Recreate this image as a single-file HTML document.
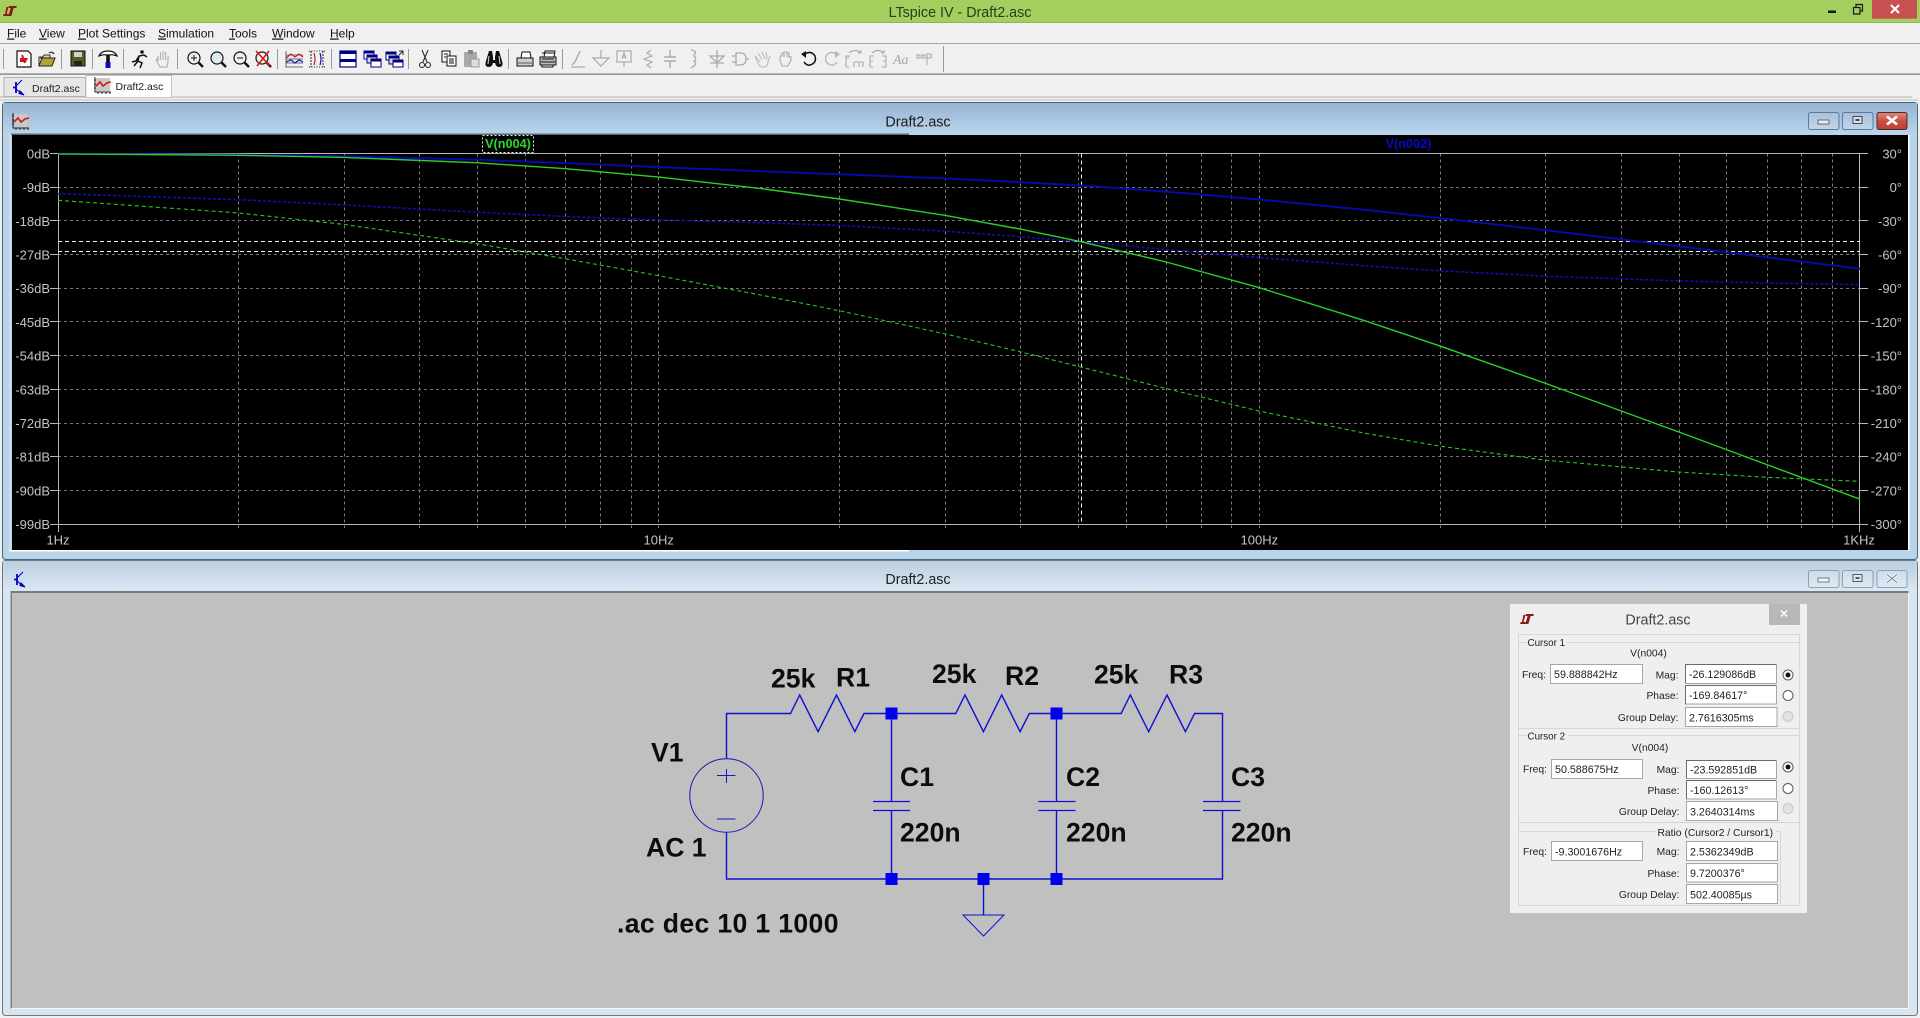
<!DOCTYPE html>
<html><head><meta charset="utf-8"><title>LTspice IV - Draft2.asc</title>
<style>
html,body{margin:0;padding:0;background:#f0f0f0;overflow:hidden;width:1920px;height:1018px}
svg{display:block;position:absolute;left:0;top:0}
text{font-family:"Liberation Sans",Arial,sans-serif}
.m{font-size:12px;fill:#111}
.t{font-size:14.3px;fill:#222}
.tb{font-size:10.5px;fill:#222}
.ax{font-size:13px;fill:#c4c4c4}
.ar{text-anchor:end}
.mid{text-anchor:middle}
.c{font-weight:bold;font-size:26.6px;fill:#0c0c0c}
.d{font-size:10.7px;fill:#222}
.l{font-size:10.3px;fill:#222}
.fl{fill:#fff;stroke:#a6a6a6;stroke-width:1}
.fd{fill:#fff;stroke:#a6a6a6;stroke-width:1}
.fde{fill:none;stroke:#6a6a6a;stroke-width:1}
.gl{fill:none;stroke:#d6d6d6;stroke-width:1}
.s{fill:none;stroke-linecap:butt}
.dg{fill:none;stroke:#a8a8a8;stroke-width:1.2}
</style></head><body>
<svg width="1920" height="1018" viewBox="0 0 1920 1018" xmlns="http://www.w3.org/2000/svg">
<defs>
<linearGradient id="g1" x1="0" y1="0" x2="0" y2="1"><stop offset="0" stop-color="#98b4d3"/><stop offset="1" stop-color="#bad4eb"/></linearGradient>
<linearGradient id="g2" x1="0" y1="0" x2="0" y2="1"><stop offset="0" stop-color="#bccedf"/><stop offset="1" stop-color="#dae8f3"/></linearGradient>
<linearGradient id="bb" x1="0" y1="0" x2="0" y2="1"><stop offset="0" stop-color="#a9c0da"/><stop offset="1" stop-color="#c2d6ea"/></linearGradient>
<linearGradient id="bl" x1="0" y1="0" x2="0" y2="1"><stop offset="0" stop-color="#cfdde9"/><stop offset="1" stop-color="#dce8f2"/></linearGradient>
<linearGradient id="br" x1="0" y1="0" x2="0" y2="1"><stop offset="0" stop-color="#d98a7e"/><stop offset=".5" stop-color="#c8503f"/><stop offset="1" stop-color="#b84030"/></linearGradient>
<g id="lt" fill="#8c1c12"><path d="M6 0H14L13.3 2H10.6L8.4 10H5.4L7.6 2H5.4Z"/><path d="M3.4 1H5.4L3.6 8H6L5.4 10H0L.8 8H2Z"/></g>
<g id="chart"><rect x="2" y="1" width="14" height="13" fill="#c8c8c8"/><path d="M1 0V15H17M0 3H2M0 7H2M0 11H2M4 15V17M8 15V17M12 15V17M16 15V17" fill="none" stroke="#222" stroke-width="1"/><path d="M2 9L6 5L9 9L13 6L17 5" fill="none" stroke="#d01818" stroke-width="1.6"/></g>
<g id="npn" fill="none" stroke="#0000c8" stroke-width="1.1"><path d="M3 1V12M0 6.500H3" stroke-width="1.800"/><path d="M3 5L9 -1M3 8L9 13"/><path d="M7 10L11 14L6 12.500Z" fill="#0000c8"/></g>
<g id="mg" fill="none" stroke="#111" stroke-width="1.2"><circle cx="-1" cy="-1" r="6"/><path d="M3.500 3.500L8 8" stroke-width="2.400"/></g>
</defs>

<!-- base -->
<rect width="1920" height="1018" fill="#f0f0f0"/>
<!-- title bar -->
<rect width="1920" height="22.500" fill="#a4cf5e"/>
<rect y="22" width="1920" height="1" fill="#8fb654"/>
<use href="#lt" x="3" y="6"/>
<text class="t mid" x="960" y="17" style="fill:#2c3a20">LTspice IV - Draft2.asc</text>
<rect x="1828" y="10.500" width="8" height="2.500" fill="#1a1a1a"/>
<path d="M1853.500 7.500h6.500v6.500h-6.500zM1856 7V4.500h6.500V11H1860" fill="none" stroke="#1a1a1a" stroke-width="1.200"/>
<rect x="1872" y="0" width="45" height="18.700" fill="#c75050"/>
<path d="M1891 5l8 8M1899 5l-8 8" stroke="#fff" stroke-width="2"/>

<!-- menu -->
<text class="m" x="7" y="37.500"><tspan text-decoration="underline">F</tspan>ile</text>
<text class="m" x="39" y="37.500"><tspan text-decoration="underline">V</tspan>iew</text>
<text class="m" x="78" y="37.500"><tspan text-decoration="underline">P</tspan>lot Settings</text>
<text class="m" x="158" y="37.500"><tspan text-decoration="underline">S</tspan>imulation</text>
<text class="m" x="229" y="37.500"><tspan text-decoration="underline">T</tspan>ools</text>
<text class="m" x="272" y="37.500"><tspan text-decoration="underline">W</tspan>indow</text>
<text class="m" x="330" y="37.500"><tspan text-decoration="underline">H</tspan>elp</text>
<rect y="43" width="1920" height="1" fill="#a8a8a8"/>
<rect y="73.500" width="1920" height="1.200" fill="#747474"/>

<!-- toolbar separators -->
<path d="M3.500 49V69M61.500 49V69M92.500 49V69M123.500 49V69M177.500 49V69M277.500 49V69M331.500 49V69M408.500 49V69M508.500 49V69M562.500 49V69M943.500 46V72" stroke="#9a9a9a" stroke-width="1" fill="none"/>
<!-- toolbar icons -->
<g transform="translate(24,59)"><path d="M-7 -8H4L7 -5V8H-7Z" fill="#fff" stroke="#111" stroke-width="1.200"/><path d="M-4 -1H4L2 3L-4 3Z" fill="#d01818"/><path d="M-2 -4L1 4" stroke="#d01818" stroke-width="2"/></g>
<g transform="translate(47,59)"><path d="M-8 7V-2H-4L-3 -4H3V-1H-7" fill="#e8d878" stroke="#333"/><path d="M-8 7L-5 -1H8L5 7Z" fill="#b8a238" stroke="#222"/><path d="M2 -6Q5 -8 7 -5" fill="none" stroke="#222" stroke-width="1.200"/></g>
<g transform="translate(78,59)"><rect x="-7" y="-8" width="14" height="15" fill="#5a5a20" stroke="#111"/><rect x="-4" y="-7" width="8" height="5" fill="#d0d0d0"/><rect x="-4" y="2" width="8" height="5" fill="#222"/></g>
<g transform="translate(108,59)"><path d="M-9 -3Q-7 -8 0 -8Q7 -8 9 -3Q4 -5 2 -4H-2Q-4 -5 -9 -3Z" fill="#fff" stroke="#111" stroke-width="1.200"/><rect x="-1.800" y="-4" width="3.600" height="8" fill="#111"/><rect x="-2.500" y="3" width="5" height="6" fill="#0a0ac0"/></g>
<g transform="translate(139,59)"><circle cx="3" cy="-7" r="1.800" fill="#111"/><path d="M-7 3L-3 2L0 -3L5 -4L8 -2M0 -3L-1 2L3 4L1 9M-1 2L-5 7" fill="none" stroke="#111" stroke-width="1.500"/></g>
<g transform="translate(163,59)" class="dg" style="stroke:#b4b4b4"><path d="M-5 2V-3M-2.500 1V-7M0 1V-8M2.500 1V-7M5 2V-3M-5 2L-6 0L-7 1L-3 8H4L5 2"/></g>
<g transform="translate(195,59)"><use href="#mg"/><path d="M-4 -1H2M-1 -4V2" stroke="#111"/></g>
<g transform="translate(218,59)"><use href="#mg"/><circle cx="-1" cy="-1" r="5" fill="#cfe8ef" opacity=".6"/></g>
<g transform="translate(241,59)"><use href="#mg"/><path d="M-4 -1H2" stroke="#111"/></g>
<g transform="translate(263,59)"><use href="#mg"/><path d="M-7 -8L7 7M6 -8L-6 7" stroke="#d01818" stroke-width="1.600"/></g>
<g transform="translate(294,59)"><path d="M-8 -8V8H9M-8 -4H9M-8 0H9M-8 4H9" stroke="#444" fill="none" stroke-width=".8"/><path d="M-8 -1L-3 -5L1 -2L5 -5L9 -2" stroke="#d01818" fill="none" stroke-width="1.200"/><path d="M-8 3L-3 1L1 4L5 1L9 3" stroke="#1010c0" fill="none" stroke-width="1.200"/></g>
<g transform="translate(317,59)"><path d="M-6 -8V8M6 -8V8" stroke="#222" fill="none" stroke-dasharray="2 1"/><path d="M-8 -8H9M-8 8H9" stroke="#222" stroke-dasharray="1 1.500" fill="none"/><path d="M-3 -6Q-1 0 -3 6" stroke="#d01818" fill="none" stroke-width="1.200"/><path d="M3 -6Q5 0 3 6" stroke="#1010c0" fill="none" stroke-width="1.200"/></g>
<g transform="translate(348,59)"><rect x="-8" y="-8" width="16" height="16" fill="#fff" stroke="#000080" stroke-width="1.200"/><rect x="-8" y="-8" width="16" height="3" fill="#000080"/><rect x="-8" y="0" width="16" height="3" fill="#000080"/></g>
<g transform="translate(372,59)"><rect x="-8" y="-8" width="10" height="8" fill="#fff" stroke="#000080"/><rect x="-8" y="-8" width="10" height="2.500" fill="#000080"/><rect x="-5" y="-4" width="10" height="8" fill="#d8d8d8" stroke="#000080"/><rect x="-5" y="-4" width="10" height="2.500" fill="#000080"/><rect x="-1" y="0" width="10" height="8" fill="#fff" stroke="#000080"/><rect x="-1" y="0" width="10" height="2.500" fill="#000080"/></g>
<g transform="translate(394,59)"><rect x="-8" y="-7" width="10" height="8" fill="#fff" stroke="#000080"/><rect x="-8" y="-7" width="10" height="2.500" fill="#000080"/><rect x="-5" y="-3" width="10" height="8" fill="#d8d8d8" stroke="#000080"/><rect x="-5" y="-3" width="10" height="2.500" fill="#000080"/><rect x="-1" y="1" width="10" height="7" fill="#fff" stroke="#000080"/><rect x="-1" y="1" width="10" height="2.500" fill="#000080"/><path d="M5 -8H9V-4M9 -8L5 -4" stroke="#222" fill="none"/></g>
<g transform="translate(425,59)" fill="none" stroke="#222" stroke-width="1"><path d="M-3 -9L2 3M3 -9L-2 3"/><circle cx="-3" cy="6" r="2.500"/><circle cx="3" cy="6" r="2.500"/></g>
<g transform="translate(449,59)"><rect x="-7" y="-8" width="8" height="11" fill="#fff" stroke="#111"/><rect x="-2" y="-3" width="9" height="10" fill="#fff" stroke="#111"/><path d="M-5 -5H-1M-5 -2H-3M0 0H5M0 2H5M0 4H5" stroke="#111"/></g>
<g transform="translate(471,59)"><rect x="-7" y="-7" width="13" height="15" rx="1" fill="#a8a8a8"/><rect x="-3" y="-9" width="5" height="4" fill="#888"/><rect x="0" y="0" width="8" height="8" fill="#ddd" stroke="#999"/></g>
<g transform="translate(494,59)" fill="#111"><path d="M-5 -8H-2L-1 -2V1H1V-2L2 -8H5L8 2Q10 8 5 8Q2 8 1 4H-1Q-2 8 -5 8Q-10 8 -8 2Z"/><path d="M-5 -3L-6 5M5 -3L6 5" stroke="#ddd"/></g>
<g transform="translate(525,59)"><path d="M-3 -7H5L6 -1H-4Z" fill="#fff" stroke="#111"/><path d="M-8 -1H8V7H-8Z" fill="#cfcfcf" stroke="#111"/><path d="M-7 4H7" stroke="#555"/></g>
<g transform="translate(548,59)"><path d="M-3 -8H7L6 -2H-4Z" fill="#fff" stroke="#111"/><path d="M-8 -2H8V6H-8Z" fill="#bdbdbd" stroke="#111"/><path d="M-6 -6H6M-6 0H6M-7 3H7" stroke="#111"/><path d="M-6 6H5V8H-6Z" fill="#fff" stroke="#111"/></g>
<g transform="translate(577,59)" fill="none" stroke="#aaa" stroke-width="1.500"><path d="M3 -8L-2 3L-5 6"/><path d="M-6 8H8" stroke-width="1.200"/></g>
<g transform="translate(601,59)" fill="none" stroke="#aaa" stroke-width="1.200"><path d="M0 -9V-1M-8 -1H8L0 7Z"/></g>
<g transform="translate(624,59)" fill="none" stroke="#aaa" stroke-width="1.200"><rect x="-7" y="-8" width="14" height="11"/><path d="M0 3V8M-2 0L0 -6L2 0M-1 -2H1"/></g>
<g transform="translate(648,59)" fill="none" stroke="#aaa" stroke-width="1.200"><path d="M3 -9L-1 -6L4 -3L-4 0L4 3L-1 6L3 9"/></g>
<g transform="translate(670,59)" fill="none" stroke="#aaa" stroke-width="1.400"><path d="M0 -9V-2M-6 -2H6M-6 2H6M0 2V9"/></g>
<g transform="translate(693,59)" fill="none" stroke="#aaa" stroke-width="1.300"><path d="M-2 -9Q4 -8 2 -5Q0 -3 2 -2Q4 1 1 2Q4 4 1 7L-2 9"/></g>
<g transform="translate(717,59)" fill="none" stroke="#aaa" stroke-width="1.300"><path d="M0 -9V9M-7 -3H7L0 4L-7 -3ZM-7 4H7"/></g>
<g transform="translate(740,59)" fill="none" stroke="#aaa" stroke-width="1.300"><path d="M-4 -6H0Q6 -6 6 0Q6 6 0 6H-4ZM-8 -3H-4M-8 3H-4M6 0H9"/></g>
<g transform="translate(763,59)" fill="none" stroke="#bbb" stroke-width="1.100"><path d="M-8 -3L-3 3M-5 -6L-1 1M-1 -7L2 0M3 -7L4 0M7 -3L5 2Q5 8 0 8H-2Q-5 6 -8 -3"/></g>
<g transform="translate(785,59)" fill="none" stroke="#aaa" stroke-width="1.100"><path d="M-5 -3V1L-3 7H3L6 1V-2L4 -3V-6H2V-7H-1V-6H-3V-3ZM-1 -6V-2M2 -6V-2M4 -3V-1"/></g>
<g transform="translate(809,59)" fill="none" stroke="#111" stroke-width="1.500"><path d="M-4 -5Q2 -9 6 -3Q8 4 1 6Q-2 7 -5 3"/><path d="M-8 -5L-3 -8V-1Z" fill="#111" stroke="none"/></g>
<g transform="translate(832,59)" fill="none" stroke="#b4b4b4" stroke-width="1.300"><path d="M4 -5Q-2 -9 -6 -3Q-8 4 -1 6Q2 7 5 3"/><path d="M8 -5L3 -8V-1Z" fill="#b4b4b4" stroke="none"/></g>
<g transform="translate(855,59)" fill="none" stroke="#aaa" stroke-width="1.100"><path d="M-9 8V-3H-5M-9 -3V8M-9 -1H-6M-9 8H-6M-1 3V8M4 3V8M-1 3H8V8M-6 -6Q0 -11 6 -6M6 -9V-6H3"/></g>
<g transform="translate(878,59)" fill="none" stroke="#aaa" stroke-width="1.100"><path d="M-8 8V-3H-4M-8 2H-5M-8 8H-5M4 -3H8V8H4M8 2H5M-6 -6Q0 -11 6 -6M6 -9V-6H3"/></g>
<text x="893" y="64" font-style="italic" fill="#a8a8a8" style="font-family:'Liberation Serif',serif;font-size:14px">Aa</text>
<g transform="translate(924,59)" fill="none" stroke="#aaa" stroke-width="1.100"><rect x="-7" y="-4" width="3" height="3"/><rect x="-2" y="-4" width="3" height="3"/><path d="M3 6V-5H7V-1H3"/></g>

<!-- tabs -->
<rect y="96.500" width="1912" height="1" fill="#b4b4b4"/>
<rect y="99.500" width="1918" height="1" fill="#c0c0c0"/>
<rect x="4" y="77.500" width="81.500" height="19" fill="#e6e6e6" stroke="#b0b0b0"/>
<rect x="86" y="75.500" width="85.500" height="22" fill="#fff" stroke="#c4c4c4"/>
<use href="#npn" x="13" y="81"/>
<text class="tb" x="32" y="92">Draft2.asc</text>
<use href="#chart" x="94" y="77"/>
<text class="tb" x="115.500" y="90">Draft2.asc</text>

<!-- plot window -->
<rect x="2.500" y="102.500" width="1915" height="457" rx="3" fill="#b9d3ea" stroke="#4a6a72"/>
<rect x="3" y="103" width="1914" height="31" fill="url(#g1)"/>
<rect x="11" y="133.500" width="898" height="1.500" fill="#5a6a78"/>
<rect x="9" y="134" width="2" height="417" fill="#d0dce8"/>
<rect x="9" y="550" width="900" height="1.500" fill="#fff"/>
<rect x="12" y="135" width="1896" height="415" fill="#000"/>
<rect x="1908" y="135" width="1.500" height="416" fill="#fff"/>
<use href="#chart" x="12" y="113"/>
<text class="t mid" x="918" y="126.500" style="fill:#1a1a1a">Draft2.asc</text>
<g stroke="#5d7a9c" stroke-width="1">
<rect x="1808.500" y="112.500" width="30.500" height="17" rx="2" fill="url(#bb)"/>
<rect x="1842.500" y="112.500" width="30.500" height="17" rx="2" fill="url(#bb)"/>
<rect x="1877" y="112.500" width="30" height="17" rx="2" fill="url(#br)" stroke="#4a2a30"/>
</g>
<rect x="1818" y="120" width="11" height="4" fill="#e8eef4" stroke="#667"/>
<rect x="1853" y="116.500" width="9" height="7" fill="#d8e2ee" stroke="#445" stroke-width="1"/>
<rect x="1855.500" y="119" width="4" height="2" fill="#445"/>
<path d="M1887 116.500l10 8M1897 116.500l-10 8" stroke="#fff" stroke-width="2.600"/>

<!-- plot grid -->
<path d="M238.500 153.500V528M344.500 153.500V528M419.500 153.500V528M477.500 153.500V528M525.500 153.500V528M565.500 153.500V528M600.500 153.500V528M631.500 153.500V528M658.500 153.500V528M839.500 153.500V528M945.500 153.500V528M1020.500 153.500V528M1078.500 153.500V528M1126.500 153.500V528M1166.500 153.500V528M1201.500 153.500V528M1231.500 153.500V528M1259.500 153.500V528M1440.500 153.500V528M1545.500 153.500V528M1621.500 153.500V528M1679.500 153.500V528M1726.500 153.500V528M1767.500 153.500V528M1801.500 153.500V528M1832.500 153.500V528" stroke="#7c7c7c" stroke-width="1" stroke-dasharray="3 3" fill="none"/>
<path d="M58 187.500H1860M58 220.500H1860M58 254.500H1860M58 288.500H1860M58 321.500H1860M58 355.500H1860M58 389.500H1860M58 423.500H1860M58 456.500H1860M58 490.500H1860" stroke="#747474" stroke-width="1" stroke-dasharray="3 3" fill="none"/>
<path d="M50 153.500H1868M50 524.500H1868M58.500 153.500V532M1859.500 153.500V532M50 187.500H58M50 220.500H58M50 254.500H58M50 288.500H58M50 321.500H58M50 355.500H58M50 389.500H58M50 423.500H58M50 456.500H58M50 490.500H58M1860 187.500H1868M1860 220.500H1868M1860 254.500H1868M1860 288.500H1868M1860 321.500H1868M1860 355.500H1868M1860 389.500H1868M1860 423.500H1868M1860 456.500H1868M1860 490.500H1868" stroke="#b8b8b8" stroke-width="1" fill="none"/>

<!-- axis labels -->
<text class="ax ar" x="50" y="158.400">0dB</text><text class="ax ar" x="50" y="192.100">-9dB</text><text class="ax ar" x="50" y="225.800">-18dB</text><text class="ax ar" x="50" y="259.500">-27dB</text><text class="ax ar" x="50" y="293.200">-36dB</text><text class="ax ar" x="50" y="326.900">-45dB</text><text class="ax ar" x="50" y="360.600">-54dB</text><text class="ax ar" x="50" y="394.300">-63dB</text><text class="ax ar" x="50" y="428">-72dB</text><text class="ax ar" x="50" y="461.700">-81dB</text><text class="ax ar" x="50" y="495.400">-90dB</text><text class="ax ar" x="50" y="529.100">-99dB</text>
<text class="ax ar" x="1902" y="158.400">30°</text><text class="ax ar" x="1902" y="192.100">0°</text><text class="ax ar" x="1902" y="225.800">-30°</text><text class="ax ar" x="1902" y="259.500">-60°</text><text class="ax ar" x="1902" y="293.200">-90°</text><text class="ax ar" x="1902" y="326.900">-120°</text><text class="ax ar" x="1902" y="360.600">-150°</text><text class="ax ar" x="1902" y="394.300">-180°</text><text class="ax ar" x="1902" y="428">-210°</text><text class="ax ar" x="1902" y="461.700">-240°</text><text class="ax ar" x="1902" y="495.400">-270°</text><text class="ax ar" x="1902" y="529.100">-300°</text>
<text class="ax mid" x="58" y="544.500">1Hz</text>
<text class="ax mid" x="658.700" y="544.500">10Hz</text>
<text class="ax mid" x="1259.300" y="544.500">100Hz</text>
<text class="ax mid" x="1859" y="544.500">1KHz</text>

<!-- cursors -->
<path d="M58 241.500H1860M58 251.500H1860M1081.500 153.500V524" stroke="#f4f4f4" stroke-width="1" stroke-dasharray="4 3" fill="none"/>

<!-- traces -->
<polyline class="s" stroke="#1010c0" stroke-width="1.500" stroke-dasharray="3 2" points="58,193.700 238.800,199.700 344.600,204.900 477.900,212.300 565.600,216.500 658.700,219.900 764.400,222.800 839.500,225.500 945.300,231.200 1020.300,236.700 1078.500,241.700 1166.300,249.500 1259.300,257.600 1365.100,265.800 1440.200,270.800 1545.900,276.200 1679.200,280.900 1766.900,283 1860,284.600"/>
<polyline class="s" stroke="#26c826" stroke-width="1.100" stroke-dasharray="4 3" points="58,200.300 238.800,213 344.600,224.500 477.900,243.900 565.600,258.800 658.700,275.700 764.400,295.700 839.500,310.700 945.300,333.900 1020.300,351.800 1078.500,366.400 1166.300,388.600 1259.300,411.100 1365.100,433.300 1440.200,446.200 1545.900,460.200 1679.200,472.100 1766.900,477.300 1860,481.300"/>
<polyline class="s" stroke="#0808a8" stroke-width="2" points="58,153.800 238.800,154.800 344.600,156.200 477.900,159.800 565.600,163.100 658.700,167.100 764.400,171.400 839.500,174.300 945.300,178.400 1020.300,182.100 1078.500,185.400 1166.300,191.600 1259.300,199.500 1365.100,209.900 1440.200,218.100 1545.900,230.300 1679.200,246.400 1766.900,257.200 1860,268.700"/>
<polyline class="s" stroke="#2ad02a" stroke-width="1.400" points="58,153.900 238.800,155.300 344.600,157.400 477.900,162.800 565.600,168.700 658.700,177.100 764.400,189 839.500,199 945.300,215.400 1020.300,229.100 1078.500,241.200 1166.300,262 1259.300,287.700 1365.100,320.800 1440.200,346.100 1545.900,383.500 1679.200,432.100 1766.900,464.600 1860,499.200"/>

<!-- trace labels -->
<rect x="482.500" y="135.500" width="51" height="17" fill="#000" stroke="#e8e8e8" stroke-dasharray="2 2"/>
<text x="508" y="148" font-weight="bold" class="mid" style="font-size:12.700px;fill:#28d828">V(n004)</text>
<text x="1408.500" y="148" font-weight="bold" class="mid" style="font-size:12.700px;fill:#0808c8">V(n002)</text>

<!-- schematic window -->
<rect x="2.500" y="560.500" width="1915" height="455" rx="3" fill="#d8e6f1" stroke="#6a7a80"/>
<rect x="3" y="561" width="1914" height="31" fill="url(#g2)"/>
<rect x="10.500" y="591" width="1898" height="2" fill="#7a7a7a"/>
<rect x="10.500" y="592" width="1.500" height="417" fill="#808080"/>
<rect x="12" y="593" width="1896" height="415" fill="#c0c0c0"/>
<rect x="11" y="1008" width="1898" height="1" fill="#f4f8fc"/>
<rect x="1908" y="593" width="1" height="416" fill="#f4f8fc"/>
<use href="#npn" x="14" y="573"/>
<text class="t mid" x="918" y="584" style="fill:#222">Draft2.asc</text>
<g stroke="#8aa0b8" stroke-width="1" fill="url(#bl)">
<rect x="1808.500" y="570.500" width="30.500" height="17" rx="2"/>
<rect x="1842.500" y="570.500" width="30.500" height="17" rx="2"/>
<rect x="1877" y="570.500" width="30" height="17" rx="2"/>
</g>
<rect x="1818" y="578" width="11" height="4" fill="#f0f4f8" stroke="#778"/>
<rect x="1853" y="574.500" width="9" height="7" fill="#e2e8f0" stroke="#556" stroke-width="1"/>
<rect x="1855.500" y="577" width="4" height="2" fill="#556"/>
<path d="M1887 574.500l10 8M1897 574.500l-10 8" stroke="#f4f6f8" stroke-width="3"/>
<path d="M1887 574.500l10 8M1897 574.500l-10 8" stroke="#778" stroke-width="1"/>

<!-- circuit -->
<g fill="none" stroke="#1010d0" stroke-width="1.400">
<path d="M726.500 759V713.500H790.500L799.700 695L818.100 731.700L836.500 695L854.800 731.700L864 713.500H955.800L965 695L983.400 731.700L1001.700 695L1020.100 731.700L1029.300 713.500H1121.100L1130.300 695L1148.700 731.700L1167 695L1185.400 731.700L1194.600 713.500H1222.500V801"/>
<path d="M726.500 832V879H1222.500V811"/>
<path d="M891.500 713.500V801M891.500 811V879M1056.500 713.500V801M1056.500 811V879M983.500 879V915"/>
<path d="M873 801.500H910M873 810.500H910M1038.500 801.500H1075.500M1038.500 810.500H1075.500M1203 801.500H1240.500M1203 810.500H1240.500" stroke-width="1.200"/>
<path d="M963 915H1004L983.500 936Z" stroke-width="1"/>
</g>
<circle cx="726.500" cy="795.500" r="36.700" fill="none" stroke="#1818b8" stroke-width="1"/>
<path d="M717 775.500H735.500M726.500 769V783M717 819H735.500" stroke="#1818b8" stroke-width="1" fill="none"/>
<g fill="#0000ee"><rect x="885.500" y="707.500" width="12" height="12"/><rect x="1050.500" y="707.500" width="12" height="12"/><rect x="885.500" y="873" width="12" height="12"/><rect x="977.500" y="873" width="12" height="12"/><rect x="1050.500" y="873" width="12" height="12"/></g>
<text class="c" x="771" y="687.500">25k</text><text class="c" x="836" y="686.500">R1</text>
<text class="c" x="932" y="683">25k</text><text class="c" x="1005" y="685">R2</text>
<text class="c" x="1094" y="683.500">25k</text><text class="c" x="1169" y="683.500">R3</text>
<text class="c" x="651" y="761.500">V1</text>
<text class="c" x="646" y="856.500">AC 1</text>
<text class="c" x="900" y="786">C1</text><text class="c" x="1066" y="786">C2</text><text class="c" x="1231" y="786">C3</text>
<text class="c" x="900" y="841.500">220n</text><text class="c" x="1066" y="841.500">220n</text><text class="c" x="1231" y="841.500">220n</text>
<text class="c" x="617" y="932.500" style="letter-spacing:.35px">.ac dec 10 1 1000</text>

<!-- cursor dialog -->
<rect x="1510" y="604" width="297" height="309" fill="#efefef"/>
<rect x="1769" y="604" width="31" height="21" fill="#b8b8b8"/>
<path d="M1781 610.500l6 6M1787 610.500l-6 6" stroke="#fff" stroke-width="1.500"/>
<use href="#lt" x="1520" y="614"/>
<text class="mid" x="1658" y="624.500" style="font-size:14.300px;fill:#444">Draft2.asc</text>
<path class="gl" d="M1518.500 634.500H1799.500V905.500H1518.500ZM1518.500 728.500H1799.500M1518.500 822.500H1799.500M1518.500 831.500H1656M1776 831.500H1780.500V905M1518 735.500H1527M1568 735.500H1799M1518 642.500H1527M1566 642.500H1799"/>
<text class="l" x="1527.500" y="646" style="font-size:9.800px">Cursor 1</text>
<text class="l mid" x="1648.500" y="656.500">V(n004)</text>
<text class="l" x="1527.500" y="739.500" style="font-size:9.800px">Cursor 2</text>
<text class="l mid" x="1650" y="751">V(n004)</text>
<text class="l" x="1657.500" y="836">Ratio (Cursor2 / Cursor1)</text>

<text class="l ar" x="1546" y="678">Freq:</text><text class="l ar" x="1678.500" y="678.500">Mag:</text><text class="l ar" x="1678.500" y="699">Phase:</text><text class="l ar" x="1678.500" y="721">Group Delay:</text>
<text class="l ar" x="1547" y="772.500">Freq:</text><text class="l ar" x="1679.500" y="773">Mag:</text><text class="l ar" x="1679.500" y="794">Phase:</text><text class="l ar" x="1679.500" y="815">Group Delay:</text>
<text class="l ar" x="1547" y="855">Freq:</text><text class="l ar" x="1679.500" y="855">Mag:</text><text class="l ar" x="1679.500" y="877">Phase:</text><text class="l ar" x="1679.500" y="898">Group Delay:</text>

<rect class="fl" x="1550.500" y="664.500" width="92" height="19"/>
<rect class="fd" x="1685.500" y="664.500" width="91" height="19"/><path class="fde" d="M1685.500 683V664.500H1776"/>
<rect class="fd" x="1685.500" y="685.500" width="91" height="18.500"/><path class="fde" d="M1685.500 704V685.500H1776"/>
<rect class="fl" x="1685.500" y="707.500" width="91.500" height="19"/>
<rect class="fl" x="1551.500" y="759.500" width="91" height="19"/>
<rect class="fd" x="1686.500" y="760.500" width="90" height="18"/><path class="fde" d="M1686.500 778V760.500H1776"/>
<rect class="fd" x="1686.500" y="780.500" width="90" height="18.500"/><path class="fde" d="M1686.500 799V780.500H1776"/>
<rect class="fl" x="1686.500" y="801.500" width="91" height="19"/>
<rect class="fl" x="1551.500" y="841.500" width="91" height="19"/>
<rect class="fl" x="1686.500" y="841.500" width="91" height="19"/>
<rect class="fl" x="1686.500" y="863.500" width="91" height="18.500"/>
<rect class="fl" x="1686.500" y="884.500" width="91" height="19"/>

<text class="d" x="1554" y="678">59.888842Hz</text><text class="d" x="1689" y="678">-26.129086dB</text><text class="d" x="1689" y="699">-169.84617°</text><text class="d" x="1689" y="721.500">2.7616305ms</text>
<text class="d" x="1555" y="773">50.588675Hz</text><text class="d" x="1690" y="773.500">-23.592851dB</text><text class="d" x="1690" y="794">-160.12613°</text><text class="d" x="1690" y="815.500">3.2640314ms</text>
<text class="d" x="1555" y="855.500">-9.3001676Hz</text><text class="d" x="1690" y="855.500">2.5362349dB</text><text class="d" x="1690" y="877">9.7200376°</text><text class="d" x="1690" y="898.500">502.40085µs</text>

<g fill="#fff" stroke="#5a5a5a" stroke-width="1">
<circle cx="1788" cy="675" r="5"/><circle cx="1788" cy="695.500" r="5"/>
<circle cx="1788" cy="767" r="5"/><circle cx="1788" cy="788.500" r="5"/>
</g>
<circle cx="1788" cy="716.500" r="5" fill="#e2e2e2" stroke="#c8c8c8"/>
<circle cx="1788" cy="808.500" r="5" fill="#e2e2e2" stroke="#c8c8c8"/>
<circle cx="1788" cy="675" r="2.500" fill="#111"/><circle cx="1788" cy="767" r="2.500" fill="#111"/>
</svg>
</body></html>
